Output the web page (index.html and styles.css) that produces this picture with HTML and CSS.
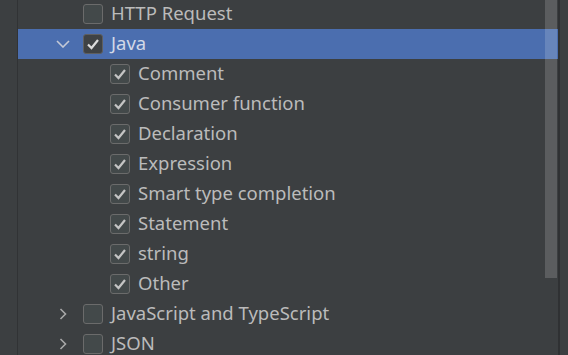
FILE: index.html
```html
<!DOCTYPE html>
<html>
<head>
<meta charset="utf-8">
<link rel="stylesheet" href="styles.css">
</head>
<body>
<div class="window">
  <div class="gutter"></div>
  <div class="panel">
    <div class="tree">
      <div class="row top">
        <span class="chev"></span>
        <span class="cb"></span>
        <span class="label">HTTP Request</span>
      </div>
      <div class="row top selected">
        <span class="chev"><svg width="14" height="8" viewBox="0 0 14 8"><path d="M1 1 L7 7 L13 1" fill="none" stroke="#c4c9d6" stroke-width="1.6"/></svg></span>
        <span class="cb checked"><svg width="20" height="20" viewBox="0 0 20 20"><path d="M5 10.5 L8.5 14 L15 6" fill="none" stroke="#dcdcdc" stroke-width="2.2"/></svg></span>
        <span class="label">Java</span>
      </div>
      <div class="row child">
        <span class="cb checked"><svg width="20" height="20" viewBox="0 0 20 20"><path d="M5 10.5 L8.5 14 L15 6" fill="none" stroke="#c4c4c4" stroke-width="2.2"/></svg></span>
        <span class="label">Comment</span>
      </div>
      <div class="row child">
        <span class="cb checked"><svg width="20" height="20" viewBox="0 0 20 20"><path d="M5 10.5 L8.5 14 L15 6" fill="none" stroke="#c4c4c4" stroke-width="2.2"/></svg></span>
        <span class="label">Consumer function</span>
      </div>
      <div class="row child">
        <span class="cb checked"><svg width="20" height="20" viewBox="0 0 20 20"><path d="M5 10.5 L8.5 14 L15 6" fill="none" stroke="#c4c4c4" stroke-width="2.2"/></svg></span>
        <span class="label">Declaration</span>
      </div>
      <div class="row child">
        <span class="cb checked"><svg width="20" height="20" viewBox="0 0 20 20"><path d="M5 10.5 L8.5 14 L15 6" fill="none" stroke="#c4c4c4" stroke-width="2.2"/></svg></span>
        <span class="label">Expression</span>
      </div>
      <div class="row child">
        <span class="cb checked"><svg width="20" height="20" viewBox="0 0 20 20"><path d="M5 10.5 L8.5 14 L15 6" fill="none" stroke="#c4c4c4" stroke-width="2.2"/></svg></span>
        <span class="label">Smart type completion</span>
      </div>
      <div class="row child">
        <span class="cb checked"><svg width="20" height="20" viewBox="0 0 20 20"><path d="M5 10.5 L8.5 14 L15 6" fill="none" stroke="#c4c4c4" stroke-width="2.2"/></svg></span>
        <span class="label">Statement</span>
      </div>
      <div class="row child">
        <span class="cb checked"><svg width="20" height="20" viewBox="0 0 20 20"><path d="M5 10.5 L8.5 14 L15 6" fill="none" stroke="#c4c4c4" stroke-width="2.2"/></svg></span>
        <span class="label">string</span>
      </div>
      <div class="row child">
        <span class="cb checked"><svg width="20" height="20" viewBox="0 0 20 20"><path d="M5 10.5 L8.5 14 L15 6" fill="none" stroke="#c4c4c4" stroke-width="2.2"/></svg></span>
        <span class="label">Other</span>
      </div>
      <div class="row top">
        <span class="chev"><svg width="8" height="12" viewBox="0 0 8 12"><path d="M1.5 1 L6.5 6 L1.5 11" fill="none" stroke="#a8a8a8" stroke-width="1.6"/></svg></span>
        <span class="cb"></span>
        <span class="label">JavaScript and TypeScript</span>
      </div>
      <div class="row top">
        <span class="chev"><svg width="8" height="12" viewBox="0 0 8 12"><path d="M1.5 1 L6.5 6 L1.5 11" fill="none" stroke="#a8a8a8" stroke-width="1.6"/></svg></span>
        <span class="cb"></span>
        <span class="label">JSON</span>
      </div>
    </div>
    <div class="scrollbar"><div class="thumb"></div></div>
  </div>
  <div class="divider"></div>
  <div class="side"></div>
</div>
</body>
</html>
```

FILE: styles.css
```css
html, body {
  margin: 0;
  padding: 0;
  background: #3c3f41;
}
.window {
  display: flex;
  width: 568px;
  height: 355px;
  overflow: hidden;
  font-family: "Noto Sans", "Open Sans", sans-serif;
  font-size: 18.5px;
  color: #bbbbbb;
}
.gutter {
  width: 17px;
  flex: none;
  border-right: 1px solid #313335;
}
.panel {
  position: relative;
  width: 540px;
  flex: none;
}
.tree {
  margin-top: -1px;
}
.row {
  display: flex;
  align-items: center;
  height: 30px;
  white-space: nowrap;
}
.row.top {
  padding-left: 36px;
}
.row.child {
  padding-left: 92px;
}
.row.selected {
  background: #4b6eaf;
  color: #d2d9e8;
}
.chev {
  width: 18px;
  height: 30px;
  display: flex;
  align-items: center;
  justify-content: center;
  margin-right: 11px;
  flex: none;
}
.cb {
  box-sizing: border-box;
  width: 20px;
  height: 20px;
  border: 1px solid #6b6b6b;
  border-radius: 3px;
  background: #43494a;
  margin-right: 8px;
  flex: none;
  display: flex;
  align-items: center;
  justify-content: center;
}
.cb svg {
  margin: -1px;
}
.row.selected .cb {
  background: #3f4244;
  border-color: #5f5f5f;
}
.label {
  line-height: 30px;
  position: relative;
  top: -1px;
}
.scrollbar {
  position: absolute;
  top: 0;
  right: 1px;
  width: 12px;
  height: 355px;
}
.thumb {
  height: 278px;
  background: rgba(255, 255, 255, 0.16);
}
.divider {
  width: 2px;
  flex: none;
  background: #2f3133;
}
.side {
  flex: 1;
  background: #3c3f41;
}
```
